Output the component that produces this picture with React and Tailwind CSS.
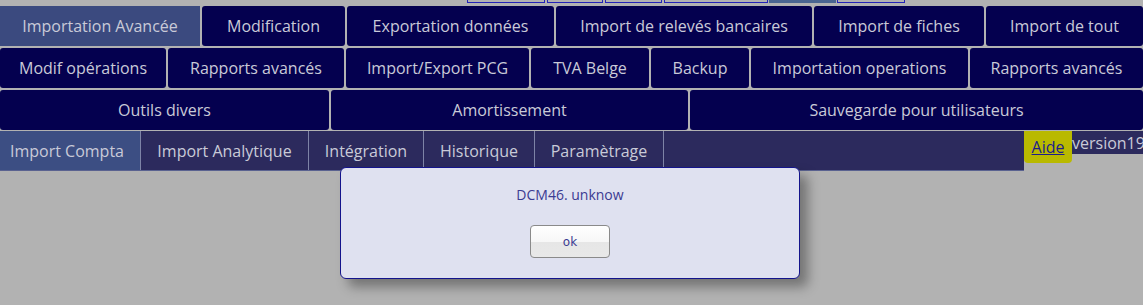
import React from "react";

const row1 = [
  { t: "Importation Avancée", w: "w-[200px]", active: true },
  { t: "Modification", w: "w-[143px]" },
  { t: "Exportation données", w: "w-[207px]" },
  { t: "Import de relevés bancaires", w: "w-[256px]" },
  { t: "Import de fiches", w: "w-[170px]" },
  { t: "Import de tout", w: "flex-1" },
];
const row2 = [
  { t: "Modif opérations", w: "w-[166px]" },
  { t: "Rapports avancés", w: "w-[176px]" },
  { t: "Import/Export PCG", w: "w-[183px]" },
  { t: "TVA Belge", w: "w-[118px]" },
  { t: "Backup", w: "w-[98px]" },
  { t: "Importation operations", w: "w-[217px]" },
  { t: "Rapports avancés", w: "flex-1" },
];
const row3 = [
  { t: "Outils divers", w: "w-[329px]" },
  { t: "Amortissement", w: "w-[357px]" },
  { t: "Sauvegarde pour utilisateurs", w: "flex-1" },
];

const sub = [
  { t: "Import Compta", w: "w-[141px] justify-start pl-[10px]", active: true },
  { t: "Import Analytique", w: "w-[168px] justify-center" },
  { t: "Intégration", w: "w-[115px] justify-center" },
  { t: "Historique", w: "w-[111px] justify-center" },
  { t: "Paramètrage", w: "w-[129px] justify-center" },
];

function Row({ items }) {
  return (
    <div className="flex h-[40px] gap-[2px]">
      {items.map((it, i) => (
        <div
          key={i}
          className={`${it.w} shrink-0 flex items-center justify-center whitespace-nowrap text-[16px] text-[#c9cad8] ${
            it.active ? "bg-[#3b4a7f]" : "bg-[#04004f] rounded-[3px]"
          }`}
        >
          {it.t}
        </div>
      ))}
    </div>
  );
}

export default function App() {
  return (
    <div className="relative w-[1143px] h-[305px] overflow-hidden bg-[#b2b2b2] font-['Open_Sans',sans-serif]">
      {/* partial top row */}
      <div className="flex h-[4px] pl-[467px] gap-[2px]">
        <div className="w-[78px] h-[3px] border-x border-b border-[#2323b8]" />
        <div className="w-[56px] h-[3px] border-x border-b border-[#2323b8]" />
        <div className="w-[57px] h-[3px] border-x border-b border-[#2323b8]" />
        <div className="w-[104px] h-[3px] border-x border-b border-[#2323b8]" />
        <div className="w-[67px] h-[3px] bg-[#4a6590] -ml-[1px]" />
        <div className="w-[68px] h-[3px] border-x border-b border-[#2323b8] -ml-[1px]" />
      </div>

      <div className="mt-[2px] flex flex-col gap-[2px]">
        <Row items={row1} />
        <Row items={row2} />
        <Row items={row3} />
      </div>

      <div className="mt-[1px] flex items-start w-[1300px]">
        <div className="w-[1024px] shrink-0 h-[40px] flex bg-[#2c2a5d] border-b border-[#5a6290]">
          {sub.map((it, i) => (
            <div
              key={i}
              className={`${it.w} shrink-0 h-full flex items-center whitespace-nowrap border-r border-[#7e83a6] text-[16px] text-[#c9cad8] ${
                it.active ? "bg-[#3c4e83]" : ""
              }`}
            >
              {it.t}
            </div>
          ))}
        </div>
        <div className="w-[48px] shrink-0 h-[32px] bg-[#b9b900] rounded-b-[4px] flex items-center justify-center">
          <a href="#" className="text-[16px] text-[#1c1c8c] underline">
            Aide
          </a>
        </div>
        <div className="shrink-0 h-[23px] bg-[#2c2a5d] flex items-center text-[16px] text-[#c9cad8] whitespace-nowrap pr-[10px]">
          version19
        </div>
      </div>

      {/* dialog overlay */}
      <div className="absolute left-[340px] top-[167px] w-[460px] h-[112px] bg-[#dfe1f0] border border-[#14148c] rounded-[6px] shadow-[8px_8px_12px_rgba(0,0,0,0.35)] flex flex-col items-center">
        <div className="mt-[16px] text-[14px] text-[#3b3b92]">DCM46. unknow</div>
        <button className="mt-[20px] w-[80px] h-[33px] rounded-[4px] border border-[#8a8a8a] bg-[linear-gradient(to_bottom,#ffffff_0%,#f7f7f7_50%,#e6e6e6_52%,#e8e8e8_100%)] text-[12px] text-[#3b3b92] font-['DejaVu_Sans',sans-serif] flex items-center justify-center">
          ok
        </button>
      </div>
    </div>
  );
}
